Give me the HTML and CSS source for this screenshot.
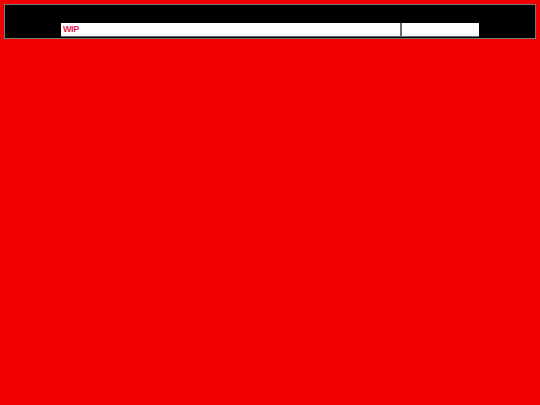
FILE: index.html
```html
<!DOCTYPE html>
<html lang="en">
<head>
    <meta charset="UTF-8">
    <meta name="viewport" content="width=device-width, initial-scale=1.0">
    <title>WIP</title>
    <link rel="stylesheet" href="styles.css">
</head>
<body>
    <div class="topbar">
        <div class="fields">
            <div class="field field-main">WIP</div>
            <div class="field field-side"></div>
        </div>
    </div>
</body>
</html>
```

FILE: styles.css
```css
body {
    font-family: "Liberation Sans", Arial, sans-serif;
    margin: 4px;
    background-color: #f00000;
}
.topbar {
    background-color: #000;
    border: 1px solid #7a7a7a;
    outline: 1px solid #f0b0b0;
    height: 35px;
    padding: 18px 0 0 56px;
    box-sizing: border-box;
}
.fields {
    display: flex;
    gap: 2px;
    width: max-content;
    background-color: #6a6a6a;
}
.field {
    background-color: #fff;
    height: 13px;
    margin-bottom: 1px;
}
.field-main {
    width: 339px;
    color: #dc1e50;
    font-size: 9px;
    font-weight: bold;
    letter-spacing: -0.4px;
    line-height: 13px;
    padding-left: 2px;
    box-sizing: border-box;
}
.field-side {
    width: 77px;
}
```
